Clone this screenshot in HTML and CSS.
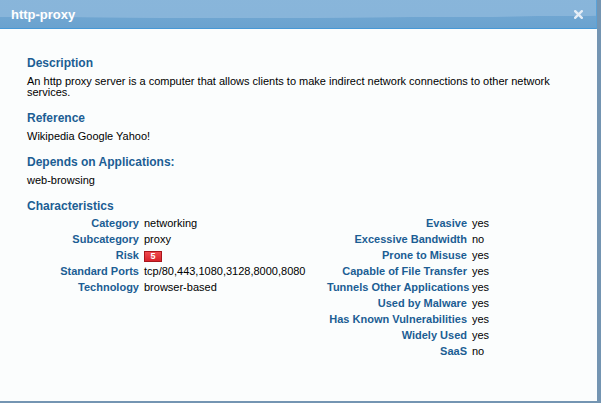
FILE: index.html
```html
<!DOCTYPE html>
<html>
<head>
<meta charset="utf-8">
<link rel="stylesheet" href="styles.css">
</head>
<body>
<div class="dialog">
  <div class="titlebar">
    <span class="title">http-proxy</span>
    <svg class="close" width="9" height="9" viewBox="0 0 9 9"><path d="M1.2 1.2 L7.8 7.8 M7.8 1.2 L1.2 7.8" stroke="#e4edf6" stroke-width="2.4" stroke-linecap="square"/></svg>
  </div>
  <div class="content">
    <div class="section">
      <h2 class="heading">Description</h2>
      <p class="text">An http proxy server is a computer that allows clients to make indirect network connections to other network services.</p>
    </div>
    <div class="section">
      <h2 class="heading">Reference</h2>
      <p class="text">Wikipedia Google Yahoo!</p>
    </div>
    <div class="section">
      <h2 class="heading">Depends on Applications:</h2>
      <p class="text">web-browsing</p>
    </div>
    <div class="section">
      <h2 class="heading chars">Characteristics</h2>
      <div class="columns">
        <div class="grid left">
          <span class="label">Category</span><span class="value">networking</span>
          <span class="label">Subcategory</span><span class="value">proxy</span>
          <span class="label">Risk</span><span class="value"><span class="risk">5</span></span>
          <span class="label">Standard Ports</span><span class="value">tcp/80,443,1080,3128,8000,8080</span>
          <span class="label">Technology</span><span class="value">browser-based</span>
        </div>
        <div class="grid right">
          <span class="label">Evasive</span><span class="value">yes</span>
          <span class="label">Excessive Bandwidth</span><span class="value">no</span>
          <span class="label">Prone to Misuse</span><span class="value">yes</span>
          <span class="label">Capable of File Transfer</span><span class="value">yes</span>
          <span class="label">Tunnels Other Applications</span><span class="value">yes</span>
          <span class="label">Used by Malware</span><span class="value">yes</span>
          <span class="label">Has Known Vulnerabilities</span><span class="value">yes</span>
          <span class="label">Widely Used</span><span class="value">yes</span>
          <span class="label">SaaS</span><span class="value">no</span>
        </div>
      </div>
    </div>
  </div>
</div>
</body>
</html>
```
FILE: styles.css
```css
html, body {
  margin: 0;
  padding: 0;
  width: 601px;
  height: 403px;
  overflow: hidden;
  background: #7495b2;
  font-family: "Liberation Sans", Arial, sans-serif;
}
.dialog {
  width: 597px;
  height: 401px;
  background: #fbfdfd;
  display: flex;
  flex-direction: column;
}
.titlebar {
  height: 28px;
  flex: none;
  border-bottom: 1px solid #4698d6;
  border-right: 1px solid #5aa2d8;
  box-sizing: content-box;
  background:
    radial-gradient(ellipse 1100px 40px at 40% -22px, #89b6da 0, #88b5da 99%, rgba(0,0,0,0) 100%),
    linear-gradient(#77abd4, #6aa2cf);
  display: flex;
  align-items: center;
  justify-content: space-between;
  padding: 0 13px 0 11px;
}
.title {
  color: #ffffff;
  font-weight: bold;
  font-size: 13px;
}
.close {
  display: block;
  margin-top: 0px;
}
.content {
  padding: 27px 20px 0 27px;
}
.section {
  margin-bottom: 13px;
}
.heading {
  margin: 0 0 6px 0;
  font-size: 12px;
  line-height: 14px;
  font-weight: bold;
  color: #1c5e94;
}
.heading.chars {
  margin-bottom: 2px;
}
.text {
  margin: 0;
  font-size: 11px;
  line-height: 11px;
  color: #000;
}
.columns {
  display: flex;
}
.grid {
  display: grid;
  grid-auto-rows: 16px;
  column-gap: 5px;
  align-items: center;
  font-size: 11px;
}
.grid.left {
  width: 300px;
  grid-template-columns: 112px auto;
}
.grid.right {
  grid-template-columns: 140px auto;
}
.label {
  text-align: right;
  font-weight: bold;
  color: #1c5e94;
  white-space: nowrap;
}
.value {
  color: #000;
  white-space: nowrap;
}
.risk {
  display: inline-block;
  width: 16px;
  height: 9px;
  line-height: 9px;
  text-align: center;
  color: #fff;
  font-weight: bold;
  font-size: 9px;
  background: linear-gradient(#ef4a4f, #d8222b);
  border: 1px solid #a8151b;
  vertical-align: middle;
  margin-top: 1px;
}
```
